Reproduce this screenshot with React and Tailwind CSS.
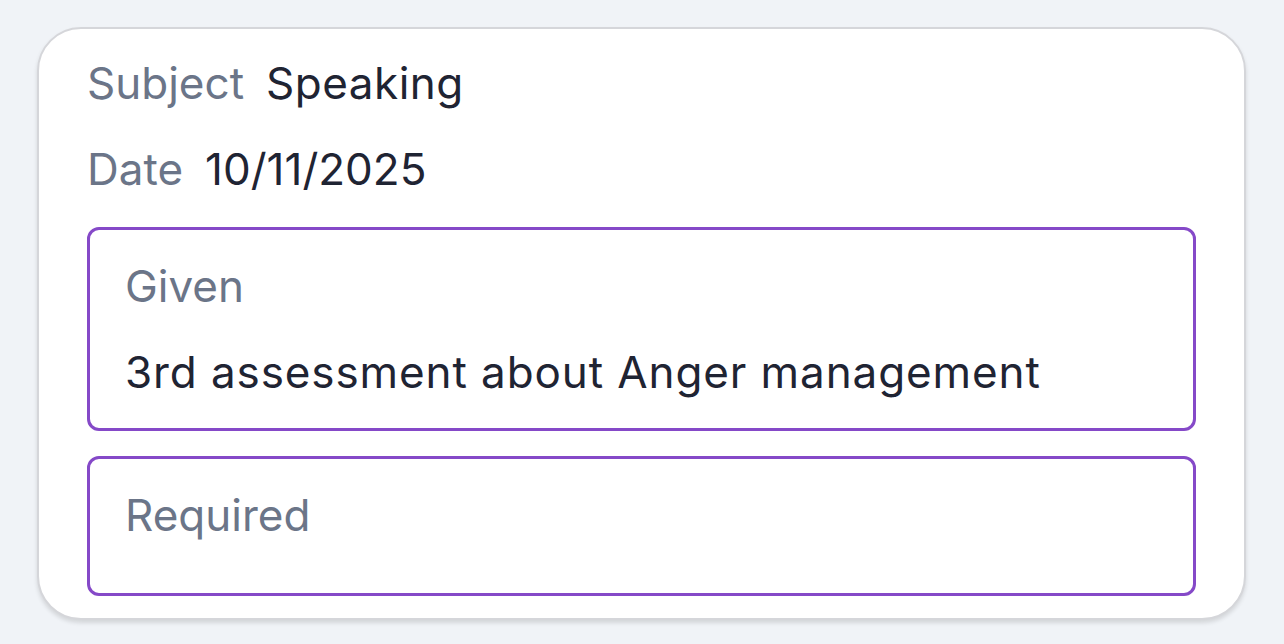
import React from "react";

const Field = ({ label, value, className = "", valueClass = "" }) => (
  <div className={`flex items-center gap-[22px] h-[56px] ${className}`}>
    <span className="text-[#6b7588]">{label}</span>
    <span className={`text-[#1f2433] ${valueClass}`}>{value}</span>
  </div>
);

const Box = ({ label, children, className = "" }) => (
  <div className={`border-[3px] border-[#8549c8] rounded-[12px] pl-[35px] pr-[36px] pt-[28px] ${className}`}>
    <div className="h-[56px] flex items-center text-[#6b7588]">{label}</div>
    {children}
  </div>
);

export default function App() {
  return (
    <div
      className="min-h-screen bg-[#f0f3f7] pl-[37px] pt-[27px]"
      style={{ fontFamily: '"Inter", "Noto Sans", sans-serif' }}
    >
      <div className="w-[1209px] h-[593px] bg-white border-2 border-[#d5d6da] rounded-[44px] shadow-[0_3px_4px_rgba(0,0,0,0.12)] px-[48px] pt-[26px] text-[44px]">
        <Field label="Subject" value="Speaking" valueClass="tracking-[0.5px]" />
        <Field label="Date" value="10/11/2025" className="mt-[30px]" />
        <Box label="Given" className="mt-[30px] pb-[28px]">
          <div className="mt-[30px] h-[56px] flex items-center text-[#1f2433] tracking-[0.9px]">
            3rd assessment about Anger management
          </div>
        </Box>
        <Box label="Required" className="mt-[25px] h-[140px] pt-[26px]" />
      </div>
    </div>
  );
}
